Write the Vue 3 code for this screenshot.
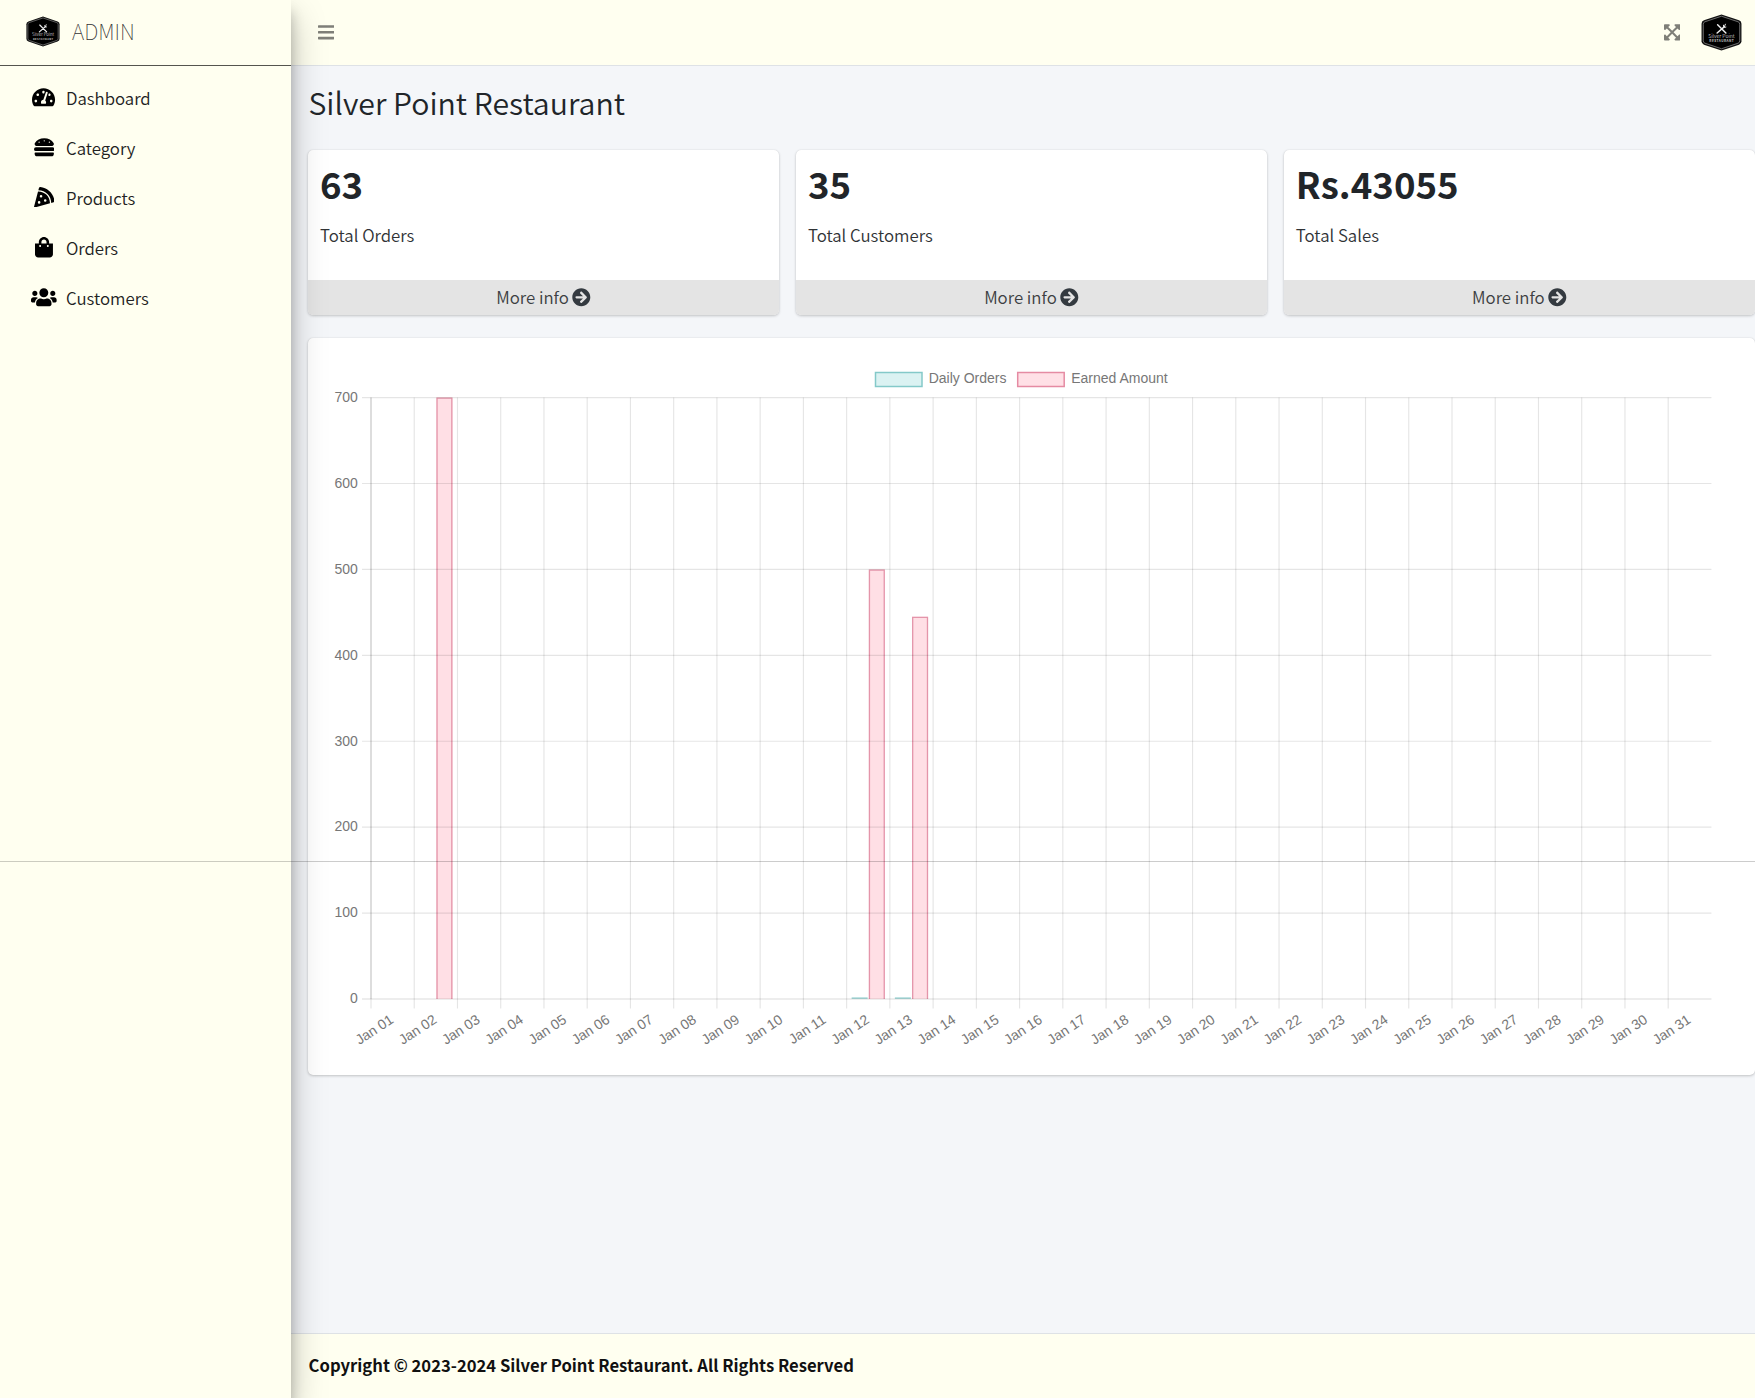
<script setup>
const nav = [
  { label: 'Dashboard', w: 576, d: 'M288 32C128.94 32 0 160.94 0 320c0 52.8 14.25 102.26 39.06 144.8 5.61 9.62 16.3 15.2 27.44 15.2h443c11.14 0 21.83-5.58 27.44-15.2C561.75 422.26 576 372.8 576 320c0-159.06-128.94-288-288-288zm0 64c14.71 0 26.58 10.13 30.32 23.65-1.11 2.26-2.64 4.23-3.45 6.67l-9.22 27.67c-5.13 3.49-10.97 6.01-17.64 6.01-17.67 0-32-14.33-32-32S270.33 96 288 96zM96 384c-17.67 0-32-14.33-32-32s14.33-32 32-32 32 14.33 32 32-14.33 32-32 32zm48-160c-17.67 0-32-14.33-32-32s14.33-32 32-32 32 14.33 32 32-14.33 32-32 32zm246.77-72.41l-61.33 184C343.13 347.33 352 364.54 352 384c0 11.72-3.38 22.55-8.88 32H232.88c-5.5-9.45-8.88-20.28-8.88-32 0-33.94 26.5-61.43 59.9-63.59l61.34-184.01c4.17-12.56 17.73-19.45 30.36-15.17 12.57 4.19 19.35 17.79 15.17 30.36zm14.66 57.2l15.52-46.55c3.47-1.29 7.13-2.23 11.05-2.23 17.67 0 32 14.33 32 32s-14.33 32-32 32c-11.38-.01-20.89-6.28-26.57-15.22zM480 384c-17.67 0-32-14.33-32-32s14.33-32 32-32 32 14.33 32 32-14.33 32-32 32z' },
  { label: 'Category', w: 512, d: 'M464 256H48a48 48 0 0 0 0 96h416a48 48 0 0 0 0-96zm16 128H32a16 16 0 0 0-16 16v16a64 64 0 0 0 64 64h352a64 64 0 0 0 64-64v-16a16 16 0 0 0-16-16zM58.64 224h394.72c34.57 0 54.62-43.9 34.82-75.88C448 83.2 359.55 32.1 256 32c-103.54.1-192 51.2-232.18 116.11C4 180.09 24.07 224 58.64 224zM384 112a16 16 0 1 1-16 16 16 16 0 0 1 16-16zM256 80a16 16 0 1 1-16 16 16 16 0 0 1 16-16zm-128 32a16 16 0 1 1-16 16 16 16 0 0 1 16-16z' },
  { label: 'Products', w: 512, d: 'M158.87.15c-16.16-1.52-31.2 8.42-35.33 24.12l-14.81 56.27c187.62 5.49 314.54 130.61 322.48 317l56.94-15.78c15.72-4.36 25.49-19.68 23.62-35.9C490.89 165.08 340.78 17.32 158.87.15zm-58.47 112L.55 491.64a16.21 16.21 0 0 0 20 19.75l379-105.1c-4.27-174.89-123.08-292.14-299.15-294.1zM128 416a32 32 0 1 1 32-32 32 32 0 0 1-32 32zm48-152a32 32 0 1 1 32-32 32 32 0 0 1-32 32zm104 104a32 32 0 1 1 32-32 32 32 0 0 1-32 32z' },
  { label: 'Orders', w: 448, d: 'M352 160v-32C352 57.42 294.579 0 224 0 153.42 0 96 57.42 96 128v32H0v272c0 44.183 35.817 80 80 80h288c44.183 0 80-35.817 80-80V160h-96zm-192-32c0-35.29 28.71-64 64-64s64 28.71 64 64v32H160v-32zm160 120c-13.255 0-24-10.745-24-24s10.745-24 24-24 24 10.745 24 24-10.745 24-24 24zm-192 0c-13.255 0-24-10.745-24-24s10.745-24 24-24 24 10.745 24 24-10.745 24-24 24z' },
  { label: 'Customers', w: 640, d: 'M96 224c35.3 0 64-28.7 64-64s-28.7-64-64-64-64 28.7-64 64 28.7 64 64 64zm448 0c35.3 0 64-28.7 64-64s-28.7-64-64-64-64 28.7-64 64 28.7 64 64 64zm32 32h-64c-17.6 0-33.5 7.1-45.1 18.6 40.3 22.1 68.9 62 75.1 109.4h66c17.7 0 32-14.3 32-32v-32c0-35.3-28.7-64-64-64zm-256 0c61.9 0 112-50.1 112-112S381.9 32 320 32 208 82.1 208 144s50.1 112 112 112zm76.8 32h-8.3c-20.8 10-43.9 16-68.5 16s-47.6-6-68.5-16h-8.3C179.6 288 128 339.6 128 403.2V432c0 26.5 21.5 48 48 48h288c26.5 0 48-21.5 48-48v-28.8c0-63.6-51.6-115.2-115.2-115.2zm-223.7-13.4C161.5 263.1 145.6 256 128 256H64c-35.3 0-64 28.7-64 64v32c0 17.7 14.3 32 32 32h65.9c6.3-47.4 34.9-87.3 75.2-109.4z' },
]
const stats = [
  { value: '63', label: 'Total Orders' },
  { value: '35', label: 'Total Customers' },
  { value: 'Rs.43055', label: 'Total Sales' },
]

// Chart geometry, relative to the chart card
const left = 63
const step = 43.24
const top = 59.6
const bottom = 661
const right = left + step * 31
const y = (v) => bottom - ((bottom - top) * v) / 700
const days = Array.from({ length: 31 }, (_, i) => ({
  label: 'Jan ' + String(i + 1).padStart(2, '0'),
  x: left + i * step,
}))
const ticks = [0, 100, 200, 300, 400, 500, 600, 700]
const earned = [{ day: 1, v: 700 }, { day: 11, v: 500 }, { day: 12, v: 445 }]
const orders = [{ day: 11, v: 2 }, { day: 12, v: 2 }]
const outline = (x, v, w) => `M${x} ${bottom}V${y(v) + 0.6}H${x + w}V${bottom}`
</script>

<template>
  <div class="app">
    <aside class="sidebar">
      <div class="brand">
        <svg class="brand-logo" viewBox="0 0 42 38">
          <path d="M21 .5 39 6.5Q41.5 7.5 41.5 10V28Q41.5 30.5 39 31.5L21 37.5 3 31.5Q.5 30.5 .5 28V10Q.5 7.5 3 6.5Z" fill="#111" />
          <path d="M21 2.3 38 8Q39.7 8.6 39.7 10.5V27.5Q39.7 29.4 38 30L21 35.7 4 30Q2.3 29.4 2.3 27.5V10.5Q2.3 8.6 4 8Z" fill="#000" stroke="#888" stroke-width=".8" />
          <path d="M17 11 25.5 19.5M24 13 16.5 19.5" stroke="#eee" stroke-width="1.5" stroke-linecap="round" />
          <path d="M23 11.5Q22.5 14.5 25.5 13.5M25 10.5 24 13" stroke="#eee" stroke-width="1" fill="none" stroke-linecap="round" />
          <text x="21" y="25" text-anchor="middle" font-size="5.2" fill="#ccc">Silver Point</text>
          <text x="21" y="29" text-anchor="middle" font-size="3.2" font-weight="700" fill="#ccc" textLength="25">RESTAURANT</text>
        </svg>
        <span class="brand-text">ADMIN</span>
      </div>
      <nav class="menu">
        <a v-for="n in nav" :key="n.label" class="item">
          <span class="icon-slot"><svg class="icon" :viewBox="`0 0 ${n.w} 512`"><path :d="n.d" /></svg></span>
          <span>{{ n.label }}</span>
        </a>
      </nav>
    </aside>

    <div class="main">
      <header class="topbar">
        <svg class="bars" viewBox="0 0 448 512"><path d="M16 132h416c9 0 16-7 16-16V76c0-9-7-16-16-16H16C7 60 0 67 0 76v40c0 9 7 16 16 16zm0 160h416c9 0 16-7 16-16v-40c0-9-7-16-16-16H16c-9 0-16 7-16 16v40c0 9 7 16 16 16zm0 160h416c9 0 16-7 16-16v-40c0-9-7-16-16-16H16c-9 0-16 7-16 16v40c0 9 7 16 16 16z" /></svg>
        <div class="tools">
          <svg class="bars" viewBox="0 0 448 512"><path d="M448 344v112a23.94 23.94 0 0 1-24 24H312c-21.39 0-32.09-25.9-17-41l36.2-36.2L224 295.6 116.77 402.9 153 439c15.09 15.1 4.39 41-17 41H24a23.94 23.94 0 0 1-24-24V344c0-21.4 25.89-32.1 41-17l36.19 36.2L184.46 256 77.18 148.7 41 185c-15.1 15.1-41 4.4-41-17V56a23.94 23.94 0 0 1 24-24h112c21.39 0 32.09 25.9 17 41l-36.2 36.2L224 216.4l107.23-107.3L295 73c-15.09-15.1-4.39-41 17-41h112a23.94 23.94 0 0 1 24 24v112c0 21.4-25.89 32.1-41 17l-36.19-36.2L263.54 256l107.28 107.3L407 327.1c15.1-15.2 41-4.5 41 16.9z" /></svg>
          <svg class="user-logo" viewBox="0 0 42 38">
            <path d="M21 .5 39 6.5Q41.5 7.5 41.5 10V28Q41.5 30.5 39 31.5L21 37.5 3 31.5Q.5 30.5 .5 28V10Q.5 7.5 3 6.5Z" fill="#111" />
            <path d="M21 2.3 38 8Q39.7 8.6 39.7 10.5V27.5Q39.7 29.4 38 30L21 35.7 4 30Q2.3 29.4 2.3 27.5V10.5Q2.3 8.6 4 8Z" fill="#000" stroke="#888" stroke-width=".8" />
            <path d="M17 11 25.5 19.5M24 13 16.5 19.5" stroke="#eee" stroke-width="1.5" stroke-linecap="round" />
            <path d="M23 11.5Q22.5 14.5 25.5 13.5M25 10.5 24 13" stroke="#eee" stroke-width="1" fill="none" stroke-linecap="round" />
            <text x="21" y="25" text-anchor="middle" font-size="5.2" fill="#ccc">Silver Point</text>
            <text x="21" y="29" text-anchor="middle" font-size="3.2" font-weight="700" fill="#ccc" textLength="25">RESTAURANT</text>
          </svg>
        </div>
      </header>

      <main class="content">
        <h1>Silver Point Restaurant</h1>
        <div class="stats">
          <section v-for="s in stats" :key="s.label" class="stat">
            <div class="inner">
              <h3>{{ s.value }}</h3>
              <p>{{ s.label }}</p>
            </div>
            <a class="more"><span>More info</span><svg viewBox="0 0 512 512"><path d="M256 8c137 0 248 111 248 248S393 504 256 504 8 393 8 256 119 8 256 8zm-28.9 143.6l75.5 72.4H120c-13.3 0-24 10.7-24 24v16c0 13.3 10.7 24 24 24h182.6l-75.5 72.4c-9.7 9.3-9.9 24.8-.4 34.3l11 10.9c9.4 9.4 24.6 9.4 33.9 0L404.3 273c9.4-9.4 9.4-24.6 0-33.9L271.6 106.3c-9.4-9.4-24.6-9.4-33.9 0l-11 10.9c-9.5 9.6-9.3 25.1.4 34.4z" /></svg></a>
          </section>
        </div>

        <section class="chart-card">
          <svg class="chart" width="1447" height="737">
            <g class="legend">
              <rect x="567.5" y="34.5" width="46.5" height="14" fill="#dbf2f2" stroke="#84c9c9" stroke-width="1.5" />
              <text x="620.7" y="45.4">Daily Orders</text>
              <rect x="709.7" y="34.5" width="46.5" height="14" fill="#ffe0e6" stroke="#e58ba3" stroke-width="1.5" />
              <text x="763.2" y="45.4">Earned Amount</text>
            </g>
            <g v-for="o in orders" :key="'o' + o.day">
              <rect :x="left + o.day * step + 5" :y="y(o.v)" width="16" :height="bottom - y(o.v)" fill="#a9dada" />
            </g>
            <g v-for="e in earned" :key="'e' + e.day">
              <rect :x="left + e.day * step + 22.2" :y="y(e.v)" width="16" :height="bottom - y(e.v)" fill="#ffdfe5" />
              <path :d="outline(left + e.day * step + 22.8, e.v, 14.8)" fill="none" stroke="#e495aa" stroke-width="1.3" />
            </g>
            <g class="grid">
              <line v-for="t in ticks" :key="t" :x1="left - 9" :x2="right" :y1="y(t)" :y2="y(t)" :class="{ zero: t === 0 }" />
              <line v-for="d in days" :key="d.label" :x1="d.x" :x2="d.x" :y1="top" :y2="bottom + 9.5" />
              <line class="axis" :x1="left" :x2="left" :y1="top" :y2="bottom" />
            </g>
            <text v-for="t in ticks" :key="'t' + t" x="49.9" :y="y(t) + 4.3" text-anchor="end">{{ t }}</text>
            <text v-for="d in days" :key="'l' + d.label" text-anchor="end" :transform="`translate(${d.x + 20.8} 679.7) rotate(-33.5)`" y="5">{{ d.label }}</text>
          </svg>
        </section>
      </main>

      <footer class="footer">Copyright © 2023-2024 Silver Point Restaurant. All Rights Reserved</footer>
    </div>
    <div class="seam"></div>
  </div>
</template>

<style>
body { margin: 0; overflow: hidden; }
</style>
<style scoped>
.app {
  position: relative;
  display: flex;
  width: 1755px;
  height: 1398px;
  overflow: hidden;
  background: #f4f6f9;
  color: #212529;
  font-family: "Noto Sans CJK SC", sans-serif;
  font-size: 16.8px;
  font-weight: 350;
  line-height: 1.5;
}
.sidebar {
  flex: none;
  z-index: 2;
  width: 290.6px;
  background: #fffff0;
  box-shadow: 0 16px 33px rgba(0, 0, 0, .25), 0 12px 12px rgba(0, 0, 0, .22);
}
.brand {
  box-sizing: border-box;
  display: flex;
  align-items: center;
  gap: 12px;
  height: 66px;
  padding: 0 0 3px 26px;
  border-bottom: 1px solid #55554f;
}
.brand-logo { width: 34px; height: 31px; }
.brand-text {
  color: #333;
  font-size: 21.2px;
  font-weight: 100;
  line-height: 30px;
}
.menu { display: flex; flex-direction: column; padding-top: 7px; }
.item {
  display: flex;
  align-items: center;
  height: 50.1px;
  padding-left: 27px;
  color: #222;
}
.item > span:last-child { padding-top: 1px; }
.icon-slot { display: flex; justify-content: center; width: 34px; margin-right: 5px; padding-bottom: 2px; }
.icon { height: 20.5px; fill: #000; }
.main { flex: 1; display: flex; flex-direction: column; min-width: 0; }
.topbar {
  box-sizing: border-box;
  display: flex;
  align-items: center;
  justify-content: space-between;
  height: 66px;
  padding: 0 13px 1px 27px;
  background: #fffff0;
  border-bottom: 1px solid #dee2e6;
}
.bars { height: 18.6px; fill: #7f7f78; }
.tools { display: flex; align-items: center; gap: 21px; }
.user-logo { width: 41px; height: 37px; }
.content { flex: 1; padding-left: 17.4px; }
h1 {
  margin: 0;
  padding: 15px 0 2px .5px;
  font-size: 30.25px;
  font-weight: 350;
  line-height: 42px;
}
.stats { display: flex; gap: 16.7px; margin-top: 25px; }
.stat {
  flex: 1;
  height: 165px;
  display: flex;
  flex-direction: column;
  overflow: hidden;
  border-radius: 5px;
  background: #fff;
  box-shadow: 0 0 1px rgba(0, 0, 0, .125), 0 1px 3px rgba(0, 0, 0, .2);
}
.inner { flex: 1; padding: 9px 12px 0; }
h3 { margin: 0; font-size: 36.6px; font-weight: 700; line-height: 50px; }
p { margin: 12px 0 0; color: #303336; line-height: 28px; }
.more {
  display: flex;
  align-items: center;
  justify-content: center;
  gap: 3.5px;
  height: 35px;
  background: #e4e4e4;
  color: #3c3f42;
}
.more svg { width: 18.6px; height: 18.6px; fill: #343a40; }
.chart-card {
  height: 737px;
  margin-top: 23px;
  border-radius: 5px;
  background: #fff;
  box-shadow: 0 0 1px rgba(0, 0, 0, .125), 0 1px 3px rgba(0, 0, 0, .2);
}
.chart { display: block; font-family: "Liberation Sans", Arial, sans-serif; font-size: 14px; font-weight: 400; fill: #777; }
.grid line { stroke: rgba(0, 0, 0, .1); stroke-width: 1.16; }
.grid .zero, .grid .axis { stroke: rgba(0, 0, 0, .14); }
.footer {
  box-sizing: border-box;
  height: 65px;
  padding: 0 18px;
  background: #fffff0;
  border-top: 1px solid #dee2e6;
  color: #111;
  font-size: 16.64px;
  font-weight: 700;
  line-height: 63px;
}
.seam {
  position: absolute;
  z-index: 3;
  top: 861px;
  left: 0;
  width: 100%;
  height: 1px;
  background: rgba(0, 0, 0, .2);
}
</style>
